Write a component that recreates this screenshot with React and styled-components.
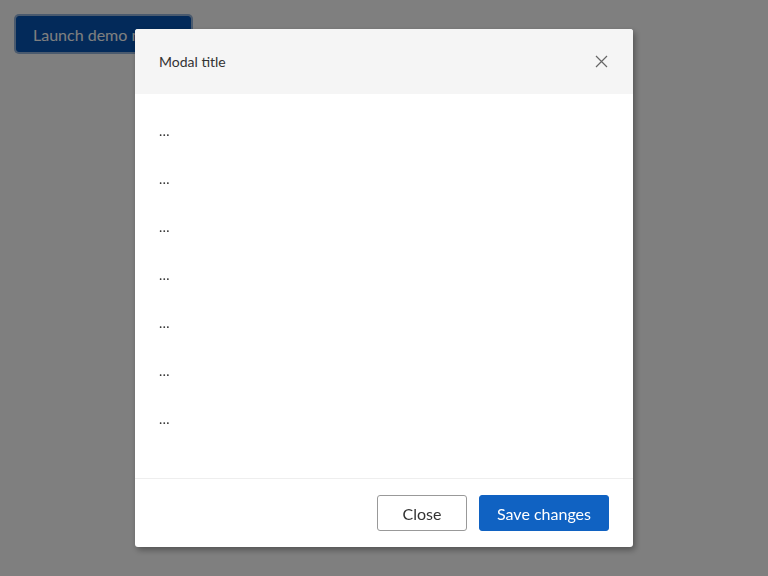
import React from 'react';
import styled, { createGlobalStyle } from 'styled-components';

const GlobalStyle = createGlobalStyle`
  html, body {
    margin: 0;
    padding: 0;
    background: #ffffff;
    font-family: Lato, "Open Sans", sans-serif;
  }
`;

const Page = styled.div`
  width: 768px;
  height: 576px;
  padding: 16px;
  box-sizing: border-box;
`;

const LaunchButton = styled.button`
  height: 36px;
  padding: 0 16px;
  font-family: Lato, sans-serif;
  font-size: 16px;
  color: #ffffff;
  background: #0654b4;
  border: 1px solid #0654b4;
  border-radius: 3px;
  box-shadow: 0 0 0 2px #94b4dc;
`;

const Backdrop = styled.div`
  position: fixed;
  inset: 0;
  background: rgba(0, 0, 0, 0.5);
  display: flex;
  align-items: center;
  justify-content: center;
`;

const Modal = styled.div`
  width: 498px;
  background: #ffffff;
  border-radius: 3px;
  overflow: hidden;
  box-shadow: 2px 3px 6px rgba(0, 0, 0, 0.35);
  display: flex;
  flex-direction: column;
`;

const Header = styled.div`
  height: 65px;
  background: #f5f5f5;
  padding: 0 24px 1px;
  box-sizing: border-box;
  display: flex;
  align-items: center;
  justify-content: space-between;
`;

const Title = styled.h2`
  margin: 0;
  font-size: 14px;
  font-weight: 400;
  color: #333333;
`;

const CloseIcon = styled.button`
  width: 16px;
  height: 16px;
  padding: 0;
  border: none;
  background: none;
  display: flex;
  align-items: center;
  justify-content: center;
`;

const Body = styled.div`
  padding: 27px 24px 21px;
`;

const Line = styled.p`
  margin: 0 0 28px;
  line-height: 20px;
  font-size: 14px;
  color: #333333;
`;

const Footer = styled.div`
  border-top: 1px solid #eeeeee;
  padding: 16px 24px;
  display: flex;
  justify-content: flex-end;
  gap: 12px;
`;

const Button = styled.button`
  height: 36px;
  width: ${(p) => p.$width}px;
  font-family: Lato, sans-serif;
  font-size: 16px;
  border-radius: 3px;
  color: ${(p) => (p.$primary ? '#ffffff' : '#333333')};
  background: ${(p) => (p.$primary ? '#1062c2' : '#ffffff')};
  border: 1px solid ${(p) => (p.$primary ? '#1062c2' : '#999999')};
`;

export default function App() {
  return (
    <>
      <GlobalStyle />
      <Page>
        <LaunchButton>Launch demo modal</LaunchButton>
      </Page>
      <Backdrop>
        <Modal>
          <Header>
            <Title>Modal title</Title>
            <CloseIcon aria-label="Close">
              <svg width="13" height="13" viewBox="0 0 13 13">
                <path d="M1 1L12 12M12 1L1 12" stroke="#666" strokeWidth="1.2" />
              </svg>
            </CloseIcon>
          </Header>
          <Body>
            {Array.from({ length: 7 }).map((_, i) => (
              <Line key={i}>…</Line>
            ))}
          </Body>
          <Footer>
            <Button $width={90}>Close</Button>
            <Button $width={130} $primary>
              Save changes
            </Button>
          </Footer>
        </Modal>
      </Backdrop>
    </>
  );
}
